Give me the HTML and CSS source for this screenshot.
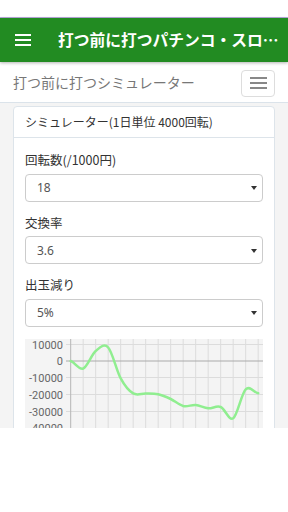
FILE: index.html
```html
<!DOCTYPE html>
<html lang="ja">
<head>
    <meta charset="UTF-8">
    <meta name="viewport" content="width=device-width, initial-scale=1.0">
    <title>打つ前に打つパチンコ・スロット</title>
    <link rel="stylesheet" href="styles.css">
</head>
<body>
    <div class="phone">
        <div class="statusbar"></div>
        <header class="toolbar">
            <div class="menu-icon"><span></span><span></span><span></span></div>
            <h1 class="app-title">打つ前に打つパチンコ・スロット</h1>
        </header>
        <div class="webview">
            <nav class="navbar">
                <span class="brand">打つ前に打つシミュレーター</span>
                <button class="toggler"><span></span><span></span><span></span></button>
            </nav>
            <main class="content">
                <div class="card">
                    <div class="card-header">シミュレーター(1日単位 4000回転)</div>
                    <div class="card-body">
                        <div class="form-group">
                            <label>回転数(/1000円)</label>
                            <div class="select-wrap">
                                <select><option>18</option></select>
                            </div>
                        </div>
                        <div class="form-group">
                            <label>交換率</label>
                            <div class="select-wrap">
                                <select><option>3.6</option></select>
                            </div>
                        </div>
                        <div class="form-group">
                            <label>出玉減り</label>
                            <div class="select-wrap">
                                <select><option>5%</option></select>
                            </div>
                        </div>
                        <div class="chart">
                            <svg width="238" height="100" viewBox="0 0 238 100">
                                <rect x="0" y="0" width="238" height="100" fill="#f4f4f4"/>
                                <!-- vertical grid -->
                                <g stroke="#dcdcdc" stroke-width="1">
                                    <line x1="58.2" y1="0" x2="58.2" y2="100"/>
                                    <line x1="70.7" y1="0" x2="70.7" y2="100"/>
                                    <line x1="83.2" y1="0" x2="83.2" y2="100"/>
                                    <line x1="95.7" y1="0" x2="95.7" y2="100"/>
                                    <line x1="108.2" y1="0" x2="108.2" y2="100"/>
                                    <line x1="120.7" y1="0" x2="120.7" y2="100"/>
                                    <line x1="133.2" y1="0" x2="133.2" y2="100"/>
                                    <line x1="145.7" y1="0" x2="145.7" y2="100"/>
                                    <line x1="158.2" y1="0" x2="158.2" y2="100"/>
                                    <line x1="170.7" y1="0" x2="170.7" y2="100"/>
                                    <line x1="183.2" y1="0" x2="183.2" y2="100"/>
                                    <line x1="195.7" y1="0" x2="195.7" y2="100"/>
                                    <line x1="208.2" y1="0" x2="208.2" y2="100"/>
                                    <line x1="220.7" y1="0" x2="220.7" y2="100"/>
                                    <line x1="233.2" y1="0" x2="233.2" y2="100"/>
                                </g>
                                <!-- horizontal grid -->
                                <g stroke="#dcdcdc" stroke-width="1">
                                    <line x1="41" y1="5.5" x2="238" y2="5.5"/>
                                    <line x1="41" y1="38.5" x2="238" y2="38.5"/>
                                    <line x1="41" y1="55.5" x2="238" y2="55.5"/>
                                    <line x1="41" y1="72.5" x2="238" y2="72.5"/>
                                    <line x1="41" y1="89.5" x2="238" y2="89.5"/>
                                </g>
                                <line x1="41" y1="22" x2="238" y2="22" stroke="#aaaaaa" stroke-width="1"/>
                                <line x1="45.7" y1="0" x2="45.7" y2="100" stroke="#b5b5b5" stroke-width="1"/>
                                <g class="axis-labels" text-anchor="end">
                                    <text x="38" y="9.5">10000</text>
                                    <text x="38" y="26">0</text>
                                    <text x="38" y="42.5">-10000</text>
                                    <text x="38" y="59.5">-20000</text>
                                    <text x="38" y="76.5">-30000</text>
                                    <text x="38" y="93">-40000</text>
                                </g>
                                <path fill="none" stroke="#90ee90" stroke-width="2.5" stroke-linecap="round"
                                      d="M45.7,22 C49.87,23.25 54.03,31.17 58.2,29.5
                                         C62.37,27.83 66.53,15.5 70.7,12
                                         C74.87,8.5 79.03,3.95 83.2,8.5
                                         C87.37,13.05 91.53,31.65 95.7,39.3
                                         C99.87,46.95 104.03,51.88 108.2,54.4
                                         C112.37,56.92 116.53,54.25 120.7,54.4
                                         C124.87,54.55 129.03,54.37 133.2,55.3
                                         C137.37,56.23 141.53,58.05 145.7,60
                                         C149.87,61.95 154.03,66 158.2,67
                                         C162.37,68 166.53,65.62 170.7,66
                                         C174.87,66.38 179.03,68.97 183.2,69.3
                                         C187.37,69.63 191.53,66.33 195.7,68
                                         C199.87,69.67 204.03,82.25 208.2,79.3
                                         C212.37,76.35 216.53,54.47 220.7,50.3
                                         C224.87,46.13 229.03,53.63 233.2,54.3"/>
                            </svg>
                        </div>
                    </div>
                </div>
            </main>
        </div>
    </div>
</body>
</html>
```

FILE: styles.css
```css
body {
    margin: 0;
    padding: 0;
    background-color: #ffffff;
    font-family: "Noto Sans CJK JP", "Noto Sans", sans-serif;
    color: #333333;
}
.phone {
    width: 288px;
    height: 428px;
    overflow: hidden;
    display: flex;
    flex-direction: column;
}
.statusbar {
    height: 17px;
    background-color: #ffffff;
    border-bottom: 1px solid #b9a9dd;
    flex-shrink: 0;
}
.toolbar {
    height: 44px;
    background-color: #228b22;
    display: flex;
    align-items: center;
    flex-shrink: 0;
    box-shadow: 0 1px 3px rgba(0, 0, 0, 0.3);
    position: relative;
    z-index: 2;
}
.menu-icon {
    width: 16px;
    margin-left: 15px;
    margin-right: 27px;
    display: flex;
    flex-direction: column;
    gap: 3px;
    flex-shrink: 0;
}
.menu-icon span {
    display: block;
    height: 2px;
    background-color: #ffffff;
}
.app-title {
    margin: 0;
    min-width: 0;
    color: #ffffff;
    font-size: 15.75px;
    font-weight: 700;
    white-space: nowrap;
    overflow: hidden;
    text-overflow: ellipsis;
    padding-right: 8px;
    line-height: 44px;
}
.webview {
    flex: 1;
    display: flex;
    flex-direction: column;
    background-color: #f4f4f4;
}
.navbar {
    height: 40px;
    padding: 0 13px;
    background-color: #ffffff;
    border-bottom: 1px solid #dbe3ea;
    display: flex;
    align-items: center;
    justify-content: space-between;
    flex-shrink: 0;
}
.brand {
    font-size: 14px;
    color: #777777;
    white-space: nowrap;
}
.toggler {
    width: 34px;
    height: 27px;
    margin-top: 2px;
    padding: 0 8px;
    background-color: #ffffff;
    border: 1px solid #dddddd;
    border-radius: 4px;
    display: flex;
    flex-direction: column;
    justify-content: center;
    gap: 3px;
}
.toggler span {
    display: block;
    height: 2px;
    width: 17px;
    background-color: #888888;
}
.content {
    padding: 3px 13px 0;
}
.card {
    background-color: #ffffff;
    border: 1px solid #dde4ea;
    border-radius: 4px;
}
.card-header {
    padding: 0 11px;
    line-height: 30px;
    font-size: 12px;
    color: #333333;
    border-bottom: 1px solid #dde4ea;
}
.card-body {
    padding: 13px 11px 0;
}
.form-group {
    margin-bottom: 12px;
}
.form-group label {
    display: block;
    font-size: 12.5px;
    line-height: 18px;
    margin-bottom: 4px;
    color: #333333;
}
.select-wrap {
    position: relative;
}
.select-wrap::after {
    content: "";
    position: absolute;
    right: 6px;
    top: 13px;
    border-left: 3px solid transparent;
    border-right: 3px solid transparent;
    border-top: 4px solid #333333;
}
.select-wrap select {
    width: 100%;
    height: 28px;
    padding: 0 11px;
    border: 1px solid #cccccc;
    border-radius: 4px;
    background-color: #ffffff;
    font-family: "Noto Sans", sans-serif;
    font-size: 12px;
    color: #555555;
    appearance: none;
    -webkit-appearance: none;
}
.chart svg {
    display: block;
}
.axis-labels text {
    font-family: Roboto, "Noto Sans", sans-serif;
    font-size: 11px;
    fill: #666666;
}
```
